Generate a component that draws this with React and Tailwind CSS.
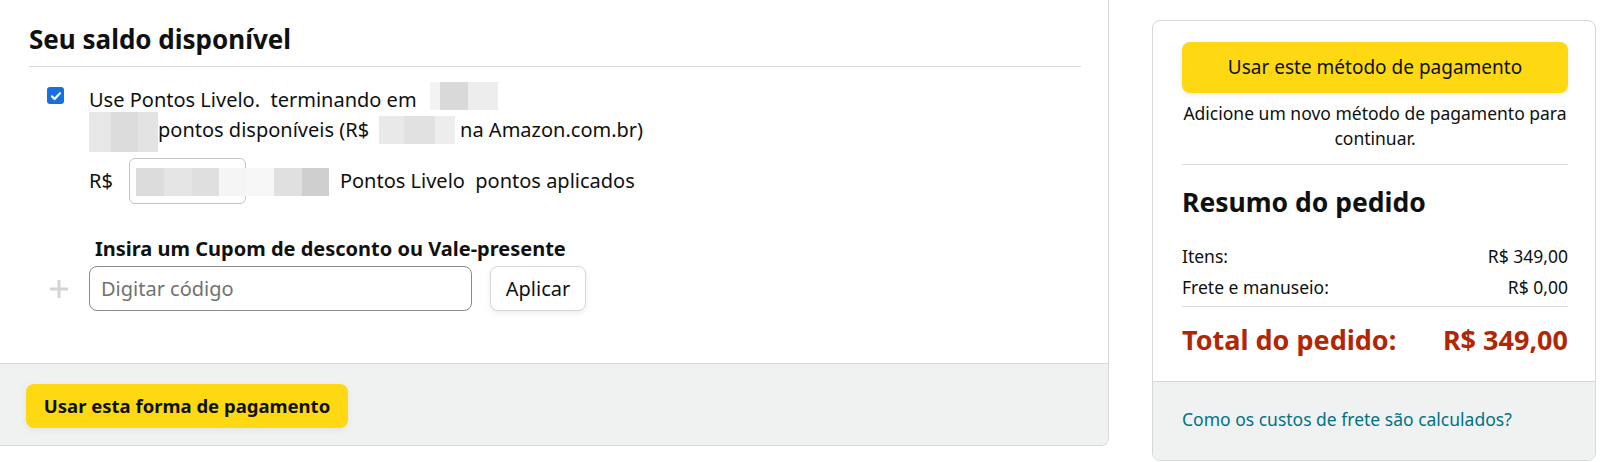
import { useState } from 'react'

// redacted bits in the reference show up as a pixel mosaic
function Mosaic({ cells, className }) {
  return (
    <span className={`inline-flex shrink-0 blur-[0.6px] ${className}`}>
      {cells.map((c, i) => <span key={i} className={`h-full ${c}`} />)}
    </span>
  )
}

function PlusIcon() {
  return (
    <svg width="20" height="20" viewBox="0 0 20 20" className="shrink-0">
      <path d="M10 1v18M1 10h18" stroke="#d3d5d5" strokeWidth="3" />
    </svg>
  )
}

export default function App() {
  const [usePoints, setUsePoints] = useState(true)
  const [code, setCode]           = useState('')

  return (
    <div className="w-[1600px] h-[462px] bg-white flex items-start overflow-hidden font-['Noto_Sans',sans-serif] text-[#0f1111]">

      {/* Left: balance / payment method */}
      <div className="w-[1109px] h-[446px] shrink-0 border-r border-b border-[#d5d9d9] rounded-br-lg overflow-hidden flex flex-col">
        <div className="flex-1 pl-[29px] pr-[27px]">
          <h2 className="pt-[23px] text-[26px] leading-[32px] font-bold">Seu saldo disponível</h2>
          <div className="mt-[11px] h-px bg-[#d5d9d9]" />

          <div className="mt-[18px] ml-[18px] flex items-start gap-[25px]">
            <button
              onClick={() => setUsePoints(p => !p)}
              className={`mt-[2px] w-[17px] h-[17px] rounded-[3px] flex items-center justify-center ${usePoints ? 'bg-[#1a6fe0]' : 'border border-[#767676] bg-white'}`}
            >
              {usePoints && (
                <svg width="12" height="12" viewBox="0 0 12 12">
                  <path d="M2 6.4l2.6 2.6L10 3.2" stroke="white" strokeWidth="2.2" fill="none" strokeLinecap="round" strokeLinejoin="round" />
                </svg>
              )}
            </button>
            <div className="text-[20px] leading-[30px]">
              <div className="h-[30px] flex items-center">
                <span>Use Pontos Livelo.&nbsp; terminando em&nbsp;</span>
                <Mosaic className="ml-[8px] h-[28px] -mt-[8px]" cells={['w-[10px] bg-[#f3f3f3]', 'w-[28px] bg-[#d9d9d9]', 'w-[30px] bg-[#ededed]']} />
              </div>
              <div className="h-[30px] flex items-center">
                <Mosaic className="h-[40px] mt-[4px]" cells={['w-[22px] bg-[#e7e7e7]', 'w-[27px] bg-[#dcdcdc]', 'w-[20px] bg-[#e3e3e3]']} />
                <span>pontos disponíveis (R$</span>
                <Mosaic className="ml-[10px] h-[28px]" cells={['w-[25px] bg-[#e9e9e9]', 'w-[31px] bg-[#e1e1e1]', 'w-[20px] bg-[#ededed]']} />
                <span className="ml-[5px]">na Amazon.com.br)</span>
              </div>
            </div>
          </div>

          <div className="mt-[13px] ml-[60px] flex items-center text-[20px]">
            <span>R$</span>
            <div className="relative ml-[16px] w-[117px] h-[46px] rounded-md border border-[#c4c4c4]">
              <Mosaic
                className="absolute left-[6px] top-[9px] h-[28px]"
                cells={['w-[28px] bg-[#dcdcdc]', 'w-[28px] bg-[#e5e5e5]', 'w-[27px] bg-[#dfdfdf]', 'w-[27px] bg-[#f5f5f5]', 'w-[28px] bg-[#f7f7f7]', 'w-[28px] bg-[#e0e0e0]', 'w-[27px] bg-[#cfcfcf]']}
              />
            </div>
            <span className="ml-[94px]">Pontos Livelo&nbsp; pontos aplicados</span>
          </div>

          <div className="mt-[33px] ml-[66px] text-[20px] leading-[24px] font-bold">Insira um Cupom de desconto ou Vale-presente</div>
          <div className="mt-[5px] ml-[20px] flex items-center">
            <PlusIcon />
            <input
              value={code}
              onChange={e => setCode(e.target.value)}
              placeholder="Digitar código"
              className="ml-[20px] w-[383px] h-[45px] px-[11px] rounded-lg border border-[#888c8c] text-[20px] outline-none placeholder:text-[#6f7373]"
            />
            <button className="ml-[18px] w-[96px] h-[45px] rounded-lg border border-[#d5d9d9] bg-white text-[20px] shadow-[0_2px_5px_rgba(213,217,217,0.5)]">
              Aplicar
            </button>
          </div>
        </div>

        <div className="h-[82px] border-t border-[#d5d9d9] bg-[#f0f2f2] pl-[26px] pt-[20px]">
          <button className="w-[322px] h-[44px] rounded-lg bg-[#ffd814] text-[18.5px] font-bold shadow-[0_2px_5px_rgba(213,217,217,0.5)]">
            Usar esta forma de pagamento
          </button>
        </div>
      </div>

      {/* Right: order summary */}
      <div className="mt-[20px] ml-[43px] w-[444px] h-[441px] shrink-0 border border-[#d5d9d9] rounded-lg overflow-hidden flex flex-col">
        <div className="flex-1 pl-[29px] pr-[27px] pt-[21px]">
          <button className="w-full h-[51px] rounded-lg bg-[#ffd814] text-[19px] shadow-[0_2px_5px_rgba(213,217,217,0.5)]">
            Usar este método de pagamento
          </button>
          <p className="mt-[8px] text-center text-[17.5px] leading-[25px]">
            Adicione um novo método de pagamento para continuar.
          </p>
          <div className="mt-[13px] h-px bg-[#d5d9d9]" />

          <h3 className="mt-[21px] text-[26.5px] leading-[32px] font-bold">Resumo do pedido</h3>
          <div className="mt-[25px] flex flex-col gap-[5px] text-[17.5px] leading-[26px]">
            <div className="flex justify-between"><span>Itens:</span><span>R$ 349,00</span></div>
            <div className="flex justify-between"><span>Frete e manuseio:</span><span>R$ 0,00</span></div>
          </div>
          <div className="mt-[6px] h-px bg-[#d5d9d9]" />
          <div className="mt-[16px] flex justify-between text-[27px] leading-[34px] font-bold text-[#b12704]">
            <span>Total do pedido:</span>
            <span>R$ 349,00</span>
          </div>
        </div>

        <div className="h-[79px] border-t border-[#d5d9d9] bg-[#f0f2f2] pl-[29px] pt-[24px]">
          <a href="#" className="text-[17.5px] leading-[26px] text-[#007185] hover:underline">
            Como os custos de frete são calculados?
          </a>
        </div>
      </div>
    </div>
  )
}
